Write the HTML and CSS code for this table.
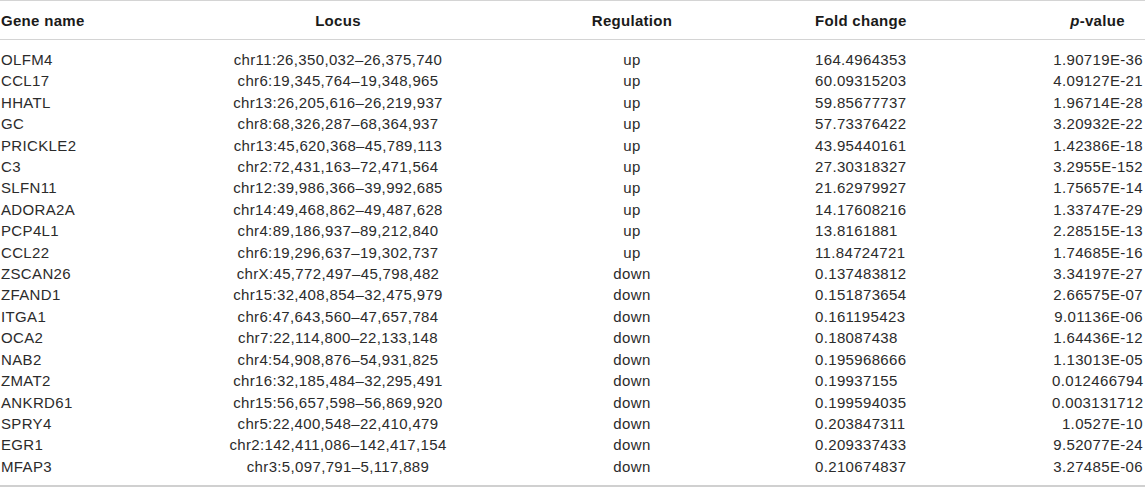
FILE: index.html
```html
<!DOCTYPE html>
<html lang="en">
<head>
<meta charset="utf-8">
<title>Differentially expressed genes</title>
<link rel="stylesheet" href="styles.css">
</head>
<body>
<table class="genes">
  <colgroup>
    <col class="c-gene">
    <col class="c-locus">
    <col class="c-reg">
    <col class="c-fold">
    <col class="c-p">
  </colgroup>
  <thead>
    <tr>
      <th class="gene">Gene name</th>
      <th class="locus">Locus</th>
      <th class="reg">Regulation</th>
      <th class="fold">Fold change</th>
      <th class="pval"><i>p</i>-value</th>
    </tr>
  </thead>
  <tbody>
    <tr><td class="gene">OLFM4</td><td class="locus">chr11:26,350,032–26,375,740</td><td class="reg">up</td><td class="fold">164.4964353</td><td class="pval">1.90719E-36</td></tr>
    <tr><td class="gene">CCL17</td><td class="locus">chr6:19,345,764–19,348,965</td><td class="reg">up</td><td class="fold">60.09315203</td><td class="pval">4.09127E-21</td></tr>
    <tr><td class="gene">HHATL</td><td class="locus">chr13:26,205,616–26,219,937</td><td class="reg">up</td><td class="fold">59.85677737</td><td class="pval">1.96714E-28</td></tr>
    <tr><td class="gene">GC</td><td class="locus">chr8:68,326,287–68,364,937</td><td class="reg">up</td><td class="fold">57.73376422</td><td class="pval">3.20932E-22</td></tr>
    <tr><td class="gene">PRICKLE2</td><td class="locus">chr13:45,620,368–45,789,113</td><td class="reg">up</td><td class="fold">43.95440161</td><td class="pval">1.42386E-18</td></tr>
    <tr><td class="gene">C3</td><td class="locus">chr2:72,431,163–72,471,564</td><td class="reg">up</td><td class="fold">27.30318327</td><td class="pval">3.2955E-152</td></tr>
    <tr><td class="gene">SLFN11</td><td class="locus">chr12:39,986,366–39,992,685</td><td class="reg">up</td><td class="fold">21.62979927</td><td class="pval">1.75657E-14</td></tr>
    <tr><td class="gene">ADORA2A</td><td class="locus">chr14:49,468,862–49,487,628</td><td class="reg">up</td><td class="fold">14.17608216</td><td class="pval">1.33747E-29</td></tr>
    <tr><td class="gene">PCP4L1</td><td class="locus">chr4:89,186,937–89,212,840</td><td class="reg">up</td><td class="fold">13.8161881</td><td class="pval">2.28515E-13</td></tr>
    <tr><td class="gene">CCL22</td><td class="locus">chr6:19,296,637–19,302,737</td><td class="reg">up</td><td class="fold">11.84724721</td><td class="pval">1.74685E-16</td></tr>
    <tr><td class="gene">ZSCAN26</td><td class="locus">chrX:45,772,497–45,798,482</td><td class="reg">down</td><td class="fold">0.137483812</td><td class="pval">3.34197E-27</td></tr>
    <tr><td class="gene">ZFAND1</td><td class="locus">chr15:32,408,854–32,475,979</td><td class="reg">down</td><td class="fold">0.151873654</td><td class="pval">2.66575E-07</td></tr>
    <tr><td class="gene">ITGA1</td><td class="locus">chr6:47,643,560–47,657,784</td><td class="reg">down</td><td class="fold">0.161195423</td><td class="pval">9.01136E-06</td></tr>
    <tr><td class="gene">OCA2</td><td class="locus">chr7:22,114,800–22,133,148</td><td class="reg">down</td><td class="fold">0.18087438</td><td class="pval">1.64436E-12</td></tr>
    <tr><td class="gene">NAB2</td><td class="locus">chr4:54,908,876–54,931,825</td><td class="reg">down</td><td class="fold">0.195968666</td><td class="pval">1.13013E-05</td></tr>
    <tr><td class="gene">ZMAT2</td><td class="locus">chr16:32,185,484–32,295,491</td><td class="reg">down</td><td class="fold">0.19937155</td><td class="pval">0.012466794</td></tr>
    <tr><td class="gene">ANKRD61</td><td class="locus">chr15:56,657,598–56,869,920</td><td class="reg">down</td><td class="fold">0.199594035</td><td class="pval">0.003131712</td></tr>
    <tr><td class="gene">SPRY4</td><td class="locus">chr5:22,400,548–22,410,479</td><td class="reg">down</td><td class="fold">0.203847311</td><td class="pval">1.0527E-10</td></tr>
    <tr><td class="gene">EGR1</td><td class="locus">chr2:142,411,086–142,417,154</td><td class="reg">down</td><td class="fold">0.209337433</td><td class="pval">9.52077E-24</td></tr>
    <tr><td class="gene">MFAP3</td><td class="locus">chr3:5,097,791–5,117,889</td><td class="reg">down</td><td class="fold">0.210674837</td><td class="pval">3.27485E-06</td></tr>
  </tbody>
</table>
</body>
</html>
```

FILE: styles.css
```css
html, body {
  margin: 0;
  padding: 0;
  background: #ffffff;
}

body {
  font-family: "Liberation Sans", Arial, Helvetica, sans-serif;
  font-size: 15px;
  color: #2b2b2b;
}

.genes {
  width: 1145px;
  border-collapse: collapse;
  table-layout: fixed;
  border-top: 1px solid #d4d4d4;
  border-bottom: 2px solid #d0d0d0;
}

.c-gene { width: 190px; }
.c-locus { width: 296px; }
.c-reg { width: 292px; }
.c-fold { width: 274px; }
.c-p { width: 93px; }

.genes th,
.genes td {
  padding: 0;
  white-space: nowrap;
}

.genes thead th {
  height: 38px;
  font-weight: bold;
  color: #1a1a1a;
  letter-spacing: 0.3px;
  vertical-align: middle;
  border-bottom: 1px solid #d4d4d4;
}

.genes td {
  line-height: 21.4px;
  font-weight: normal;
  letter-spacing: 0.35px;
}

.genes tbody tr:first-child td {
  padding-top: 9px;
}

.genes tbody tr:last-child td {
  padding-bottom: 8px;
}

.genes .gene {
  text-align: left;
  padding-left: 1px;
}

.genes .locus,
.genes .reg {
  text-align: center;
}

.genes .fold {
  text-align: left;
  padding-left: 37px;
}

.genes th.pval {
  text-align: center;
  padding-right: 2px;
}

.genes td.pval {
  text-align: right;
  padding-right: 2px;
}
```
